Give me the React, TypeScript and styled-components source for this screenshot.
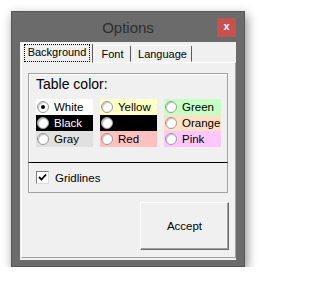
import React, { useState } from 'react';
import styled, { createGlobalStyle } from 'styled-components';

const GlobalStyle = createGlobalStyle`
    html, body {
        margin: 0;
        padding: 0;
        background: #ffffff;
        font-family: "Liberation Sans", Arial, sans-serif;
    }
`;

const Page = styled.div`
    padding: 11px 0 0 11px;
`;

const Window = styled.div`
    width: 234px;
    height: 256px;
    box-sizing: border-box;
    background: #6b6b6b;
    border: 1px solid #555555;
    box-shadow: 2px 4px 10px rgba(0, 0, 0, 0.45);
    display: flex;
    flex-direction: column;
`;

const TitleBar = styled.div`
    height: 30px;
    display: grid;
    grid-template-columns: 1fr auto 1fr;
    align-items: center;
    padding: 0 8px 0 8px;
`;

const Title = styled.div`
    grid-column: 2;
    font-size: 15px;
    color: #2e2e2e;
`;

const CloseButton = styled.div`
    grid-column: 3;
    justify-self: end;
    width: 19px;
    height: 19px;
    background: #c75050;
    color: #ffffff;
    font-size: 11px;
    font-weight: bold;
    display: flex;
    align-items: center;
    justify-content: center;
    padding-bottom: 2px;
    box-sizing: border-box;
`;

const Client = styled.div`
    flex: 1;
    margin: 0 8px 6px 8px;
    background: #f0f0f0;
    padding: 1px 0 2px 1px;
    display: flex;
    flex-direction: column;
`;

const TabStrip = styled.div`
    height: 19px;
    display: flex;
    align-items: flex-end;
    position: relative;
    z-index: 1;
`;

const Tab = styled.div<{ active?: boolean; w: number }>`
    width: ${p => p.w}px;
    height: ${p => (p.active ? 20 : 17)}px;
    margin-right: ${p => (p.active ? 1 : 2)}px;
    margin-bottom: ${p => (p.active ? -1 : 0)}px;
    box-sizing: border-box;
    background: #f0f0f0;
    border: 1px solid;
    border-color: #ffffff #5a5a5a transparent #ffffff;
    border-radius: 2px 2px 0 0;
    font-size: 11px;
    color: #000;
    display: flex;
    align-items: ${p => (p.active ? 'flex-start' : 'center')};
    justify-content: center;
    padding-top: ${p => (p.active ? 1 : 0)}px;
`;

const FocusLabel = styled.span`
    outline: 1px dotted #000;
    outline-offset: 0;
    padding: 1px 3px 2px 3px;
    line-height: 13px;
`;

const Panel = styled.div`
    flex: 1;
    border: 1px solid;
    border-color: #ffffff #a0a0a0 #a0a0a0 #ffffff;
    padding: 10px 7px 6px 6px;
    display: flex;
    flex-direction: column;
`;

const GroupBox = styled.div`
    height: 89px;
    box-sizing: border-box;
    border: 1px solid #a0a0a0;
    border-bottom: none;
    box-shadow: inset 1px 1px 0 #ffffff;
    padding: 2px 6px 0 7px;
`;

const GroupTitle = styled.div`
    font-size: 14px;
    line-height: 16px;
    color: #000;
`;

const ColorGrid = styled.div`
    margin-top: 7px;
    display: grid;
    grid-template-columns: repeat(3, 57px);
    grid-auto-rows: 16px;
    column-gap: 7px;
`;

const ColorOption = styled.label<{ bg: string; dark?: boolean }>`
    background: ${p => p.bg};
    color: ${p => (p.dark ? '#ffffff' : '#000000')};
    font-size: 11.5px;
    display: flex;
    align-items: center;
    gap: 5px;
    padding-left: 1px;
    cursor: default;
`;

const Radio = styled.span<{ checked?: boolean }>`
    width: 12px;
    height: 12px;
    box-sizing: border-box;
    border-radius: 50%;
    background: #ffffff;
    border: 1px solid #9a9a9a;
    box-shadow: inset 1px 1px 1px #c0c0c0;
    display: flex;
    align-items: center;
    justify-content: center;
    &::after {
        content: '';
        width: 4px;
        height: 4px;
        border-radius: 50%;
        background: ${p => (p.checked ? '#000' : 'transparent')};
    }
`;

const GridlinesBox = styled.div`
    height: 31px;
    box-sizing: border-box;
    border: 1px solid #a0a0a0;
    border-top: 1px solid #000000;
    box-shadow: inset 1px 0 0 #ffffff;
    padding: 0 0 0 7px;
    display: flex;
    align-items: center;
    gap: 6px;
    font-size: 11.5px;
`;

const CheckBox = styled.span`
    width: 13px;
    height: 13px;
    box-sizing: border-box;
    background: #ffffff;
    border: 1px solid;
    border-color: #808080 #dcdcdc #dcdcdc #808080;
    display: flex;
    align-items: center;
    justify-content: center;
`;

const Footer = styled.div`
    margin-top: 9px;
    display: flex;
    justify-content: flex-end;
    margin-right: -1px;
`;

const AcceptButton = styled.button`
    width: 89px;
    height: 48px;
    background: #f0f0f0;
    border: 1px solid;
    border-color: #ffffff #696969 #696969 #ffffff;
    box-shadow: inset -1px -1px 0 #a0a0a0;
    font-family: "Liberation Sans", Arial, sans-serif;
    font-size: 11.5px;
    color: #000;
    padding: 0;
`;

const colors = [
    { name: 'White', bg: '#ffffff' },
    { name: 'Yellow', bg: '#ffffc6' },
    { name: 'Green', bg: '#c6ffc6' },
    { name: 'Black', bg: '#000000', dark: true },
    { name: '', bg: '#000000', dark: true },
    { name: 'Orange', bg: '#ffe0c4' },
    { name: 'Gray', bg: '#e0e0e0' },
    { name: 'Red', bg: '#ffc0c0' },
    { name: 'Pink', bg: '#ffc6ff' },
];

const App = () => {
    const [selected, setSelected] = useState(0);

    return (
        <Page>
            <GlobalStyle />
            <Window>
                <TitleBar>
                    <Title>Options</Title>
                    <CloseButton>x</CloseButton>
                </TitleBar>
                <Client>
                    <TabStrip>
                        <Tab active w={72}><FocusLabel>Background</FocusLabel></Tab>
                        <Tab w={37}>Font</Tab>
                        <Tab w={59}>Language</Tab>
                    </TabStrip>
                    <Panel>
                        <GroupBox>
                            <GroupTitle>Table color:</GroupTitle>
                            <ColorGrid>
                                {colors.map((c, i) => (
                                    <ColorOption key={i} bg={c.bg} dark={c.dark} onClick={() => setSelected(i)}>
                                        <Radio checked={selected === i} />
                                        {c.name}
                                    </ColorOption>
                                ))}
                            </ColorGrid>
                        </GroupBox>
                        <GridlinesBox>
                            <CheckBox>
                                <svg width="9" height="9" viewBox="0 0 9 9">
                                    <path d="M1 4 L3.5 6.5 L8 1.5" stroke="#000" strokeWidth="1.8" fill="none" />
                                </svg>
                            </CheckBox>
                            Gridlines
                        </GridlinesBox>
                        <Footer>
                            <AcceptButton>Accept</AcceptButton>
                        </Footer>
                    </Panel>
                </Client>
            </Window>
        </Page>
    );
};

export default App;
